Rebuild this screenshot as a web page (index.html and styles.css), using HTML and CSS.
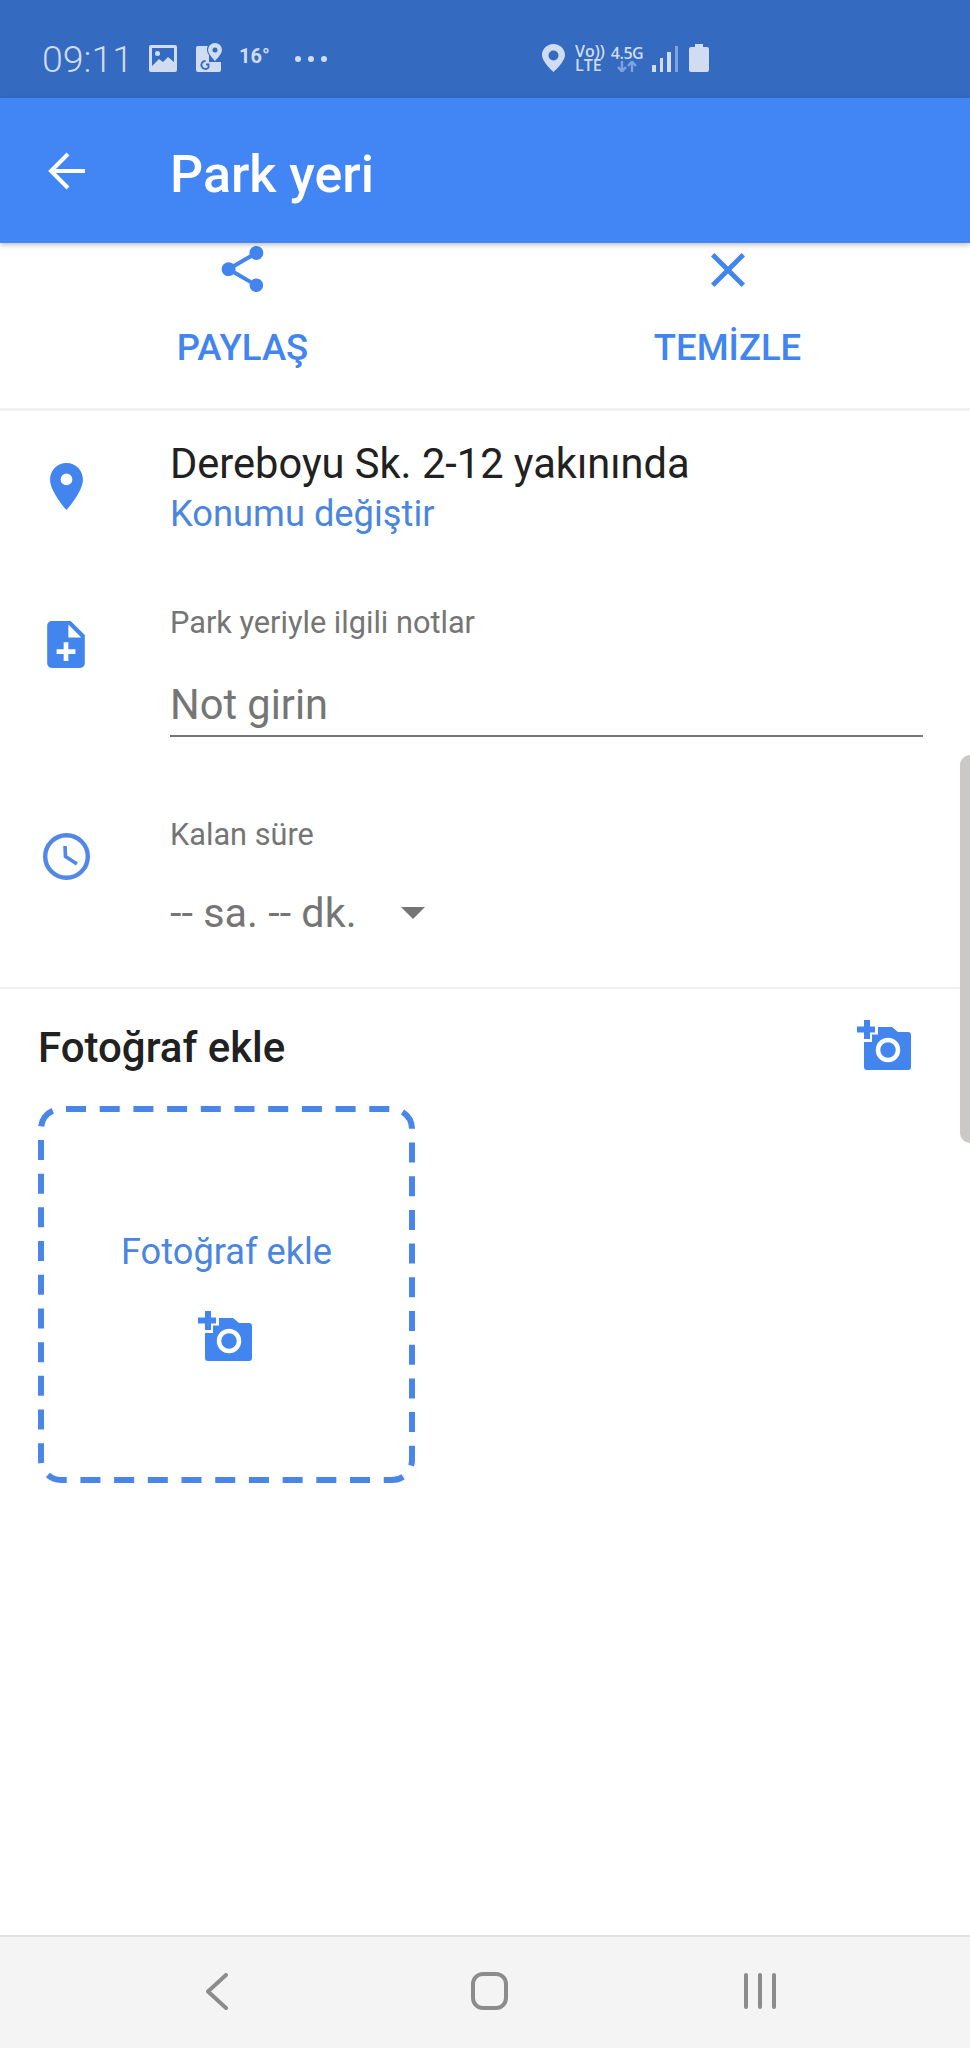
FILE: index.html
```html
<!DOCTYPE html>
<html lang="en">
<head>
    <meta charset="UTF-8">
    <meta name="viewport" content="width=device-width, initial-scale=1.0">
    <title>Park yeri</title>
    <link rel="stylesheet" href="styles.css">
</head>
<body>

    <!-- camera icon used twice -->
    <svg class="defs" width="0" height="0">
        <symbol id="add-photo" viewBox="0 0 54 50">
            <path d="M18 7H35L41 12H51a3 3 0 0 1 3 3V47a3 3 0 0 1-3 3H10a3 3 0 0 1-3-3V18z" fill="#4285ee"/>
            <path d="M10 0V22M0 9.5H21" fill="none" stroke="#fff" stroke-width="10"/>
            <path d="M10 0V19M0 9.5H18" fill="none" stroke="#4285ee" stroke-width="6"/>
            <circle cx="31" cy="30" r="10" fill="#4285ee" stroke="#fff" stroke-width="4.5"/>
        </symbol>
    </svg>

    <div class="phone">
        <div class="status-bar">
            <span class="time">09:11</span>
            <svg class="status-image" width="28" height="27" viewBox="0 0 28 27">
                <rect width="28" height="27" rx="2" fill="#cfdcf2"/>
                <rect x="3" y="3" width="22" height="21" fill="#346ac0"/>
                <circle cx="8.5" cy="8.5" r="2.5" fill="#cfdcf2"/>
                <path d="M3 21L10 14L14 17L19 12L25 17V24H3z" fill="#cfdcf2"/>
            </svg>
            <svg class="status-maps" width="27" height="30" viewBox="0 0 27 30">
                <path d="M2 4H13V20H25V28a2 2 0 0 1-2 2H2a2 2 0 0 1-2-2V6a2 2 0 0 1 2-2z" fill="#cfdcf2"/>
                <path d="M19 0a7.5 7.5 0 0 0-8 8c0 5 8 12 8 12s8-7 8-12a7.5 7.5 0 0 0-8-8z" fill="#346ac0"/>
                <path d="M19 1a7 7 0 0 0-7 7c0 4 7 11 7 11s7-7 7-11a7 7 0 0 0-7-7zm0 4.5a2.5 2.5 0 1 1 0 5 2.5 2.5 0 0 1 0-5z" fill="#cfdcf2"/>
                <path d="M9.5 19a4 4 0 1 0 3 6.5V22.500H10" fill="none" stroke="#346ac0" stroke-width="1.8"/>
            </svg>
            <span class="temp">16°</span>
            <span class="dots"><i></i><i></i><i></i></span>

            <div class="status-right">
                <svg width="23" height="28" viewBox="0 0 23 28">
                    <path fill-rule="evenodd" d="M11.5 0C5 0 0 5 0 11c0 7 11.5 17 11.5 17S23 18 23 11C23 5 18 0 11.5 0zm0 6.5a5 5 0 1 1 0 10 5 5 0 0 1 0-10z" fill="#cfdcf2"/>
                </svg>
                <div class="volte"><span>Vo))</span><span>LTE</span></div>
                <div class="net">
                    <span>4.5G</span>
                    <svg width="20" height="11" viewBox="0 0 20 11">
                        <path d="M5 0V10M1 6L5 10.500L9 6M15 11V1M11 5L15 .5L19 5" fill="none" stroke="#7fa3de" stroke-width="2.4"/>
                    </svg>
                </div>
                <div class="signal">
                    <i class="bar-1"></i><i class="bar-2"></i><i class="bar-3"></i><i class="bar-4"></i>
                </div>
                <div class="battery"></div>
            </div>
        </div>

        <div class="app-bar">
            <svg width="38" height="38" viewBox="0 0 38 38">
                <path d="M37 19H3M20 2L3 19L20 36" fill="none" stroke="#fff" stroke-width="4"/>
            </svg>
            <h1>Park yeri</h1>
        </div>

        <div class="content">
            <div class="actions">
                <div class="action">
                    <div class="action-icon">
                        <svg width="43" height="47" viewBox="3 2 18 20.3">
                            <path d="M18 16.08c-.76 0-1.44.3-1.96.77L8.91 12.7c.05-.23.09-.46.09-.7s-.04-.47-.09-.7l7.05-4.11c.54.5 1.25.81 2.04.81 1.66 0 3-1.34 3-3s-1.34-3-3-3-3 1.34-3 3c0 .24.04.47.09.7L8.04 9.81C7.5 9.31 6.79 9 6 9c-1.66 0-3 1.34-3 3s1.34 3 3 3c.79 0 1.5-.31 2.04-.81l7.12 4.16c-.05.21-.08.43-.08.65 0 1.61 1.31 2.92 2.92 2.92 1.61 0 2.92-1.31 2.92-2.92s-1.31-2.92-2.92-2.92z" fill="#4285ee"/>
                        </svg>
                    </div>
                    <span class="action-label">PAYLAŞ</span>
                </div>
                <div class="action">
                    <div class="action-icon">
                        <svg width="34" height="34" viewBox="5 5 14 14">
                            <path d="M19 6.41L17.59 5 12 10.59 6.41 5 5 6.41 10.59 12 5 17.59 6.41 19 12 13.41 17.59 19 19 17.59 13.41 12z" fill="#4285ee"/>
                        </svg>
                    </div>
                    <span class="action-label">TEMİZLE</span>
                </div>
            </div>

            <div class="form">
                <div class="row">
                    <div class="row-icon icon-place">
                        <svg width="33" height="47" viewBox="5 2 14 20">
                            <path d="M12 2C8.13 2 5 5.13 5 9c0 5.25 7 13 7 13s7-7.75 7-13c0-3.87-3.13-7-7-7zm0 9.5a2.5 2.5 0 0 1 0-5 2.5 2.5 0 0 1 0 5z" fill="#4285ee"/>
                        </svg>
                    </div>
                    <div class="row-body">
                        <p class="address">Dereboyu Sk. 2-12 yakınında</p>
                        <a class="change-link">Konumu değiştir</a>
                    </div>
                </div>

                <div class="row row-notes">
                    <div class="row-icon icon-note">
                        <svg width="38" height="47" viewBox="4 2 16 20">
                            <path d="M14 2H6c-1.1 0-2 .9-2 2v16c0 1.1.9 2 2 2h12c1.1 0 2-.9 2-2V8l-6-6zm2 14h-3v3h-2v-3H8v-2h3v-3h2v3h3v2zm-3-7V3.5L18.5 9H13z" fill="#4285ee"/>
                        </svg>
                    </div>
                    <div class="row-body">
                        <p class="field-label">Park yeriyle ilgili notlar</p>
                        <p class="note-input">Not girin</p>
                    </div>
                </div>

                <div class="row row-time">
                    <div class="row-icon icon-clock">
                        <svg width="47" height="47" viewBox="0 0 47 47">
                            <circle cx="23.5" cy="23.5" r="21.3" fill="none" stroke="#5088e8" stroke-width="4.4"/>
                            <path d="M22 13L22.5 23.5L34 31" fill="none" stroke="#5088e8" stroke-width="3.6"/>
                        </svg>
                    </div>
                    <div class="row-body">
                        <p class="field-label">Kalan süre</p>
                        <div class="time-select">
                            <span>-- sa. -- dk.</span>
                            <i class="caret"></i>
                        </div>
                    </div>
                </div>
            </div>

            <div class="photos">
                <div class="photos-head">
                    <h2>Fotoğraf ekle</h2>
                    <svg class="camera" width="54" height="50"><use href="#add-photo"/></svg>
                </div>
                <div class="photo-box">
                    <svg class="photo-dash" width="377" height="377" viewBox="0 0 377 377">
                        <rect x="3" y="3" width="371" height="371" rx="20" fill="none" stroke="#4a86e8" stroke-width="6" stroke-dasharray="20 13.7" stroke-dashoffset="-5"/>
                    </svg>
                    <span class="photo-text">Fotoğraf ekle</span>
                    <svg class="camera" width="54" height="50"><use href="#add-photo"/></svg>
                </div>
            </div>

            <div class="scrollbar"></div>
        </div>

        <div class="nav-bar">
            <svg width="22" height="37" viewBox="0 0 22 37">
                <path d="M20 2L2 18.5L20 35" fill="none" stroke="#8c8c8c" stroke-width="4" stroke-linecap="round" stroke-linejoin="round"/>
            </svg>
            <div class="nav-home"></div>
            <div class="nav-recent"><i></i><i></i><i></i></div>
        </div>
    </div>

</body>
</html>
```

FILE: styles.css
```css
* {
    box-sizing: border-box;
}

body {
    margin: 0;
    background-color: #fff;
    font-family: Roboto, "Liberation Sans", sans-serif;
}

h1, h2, p {
    margin: 0;
}

i {
    display: block;
}

svg {
    display: block;
    flex-shrink: 0;
}

.defs {
    position: absolute;
}

.phone {
    display: flex;
    flex-direction: column;
    height: 100vh;
    overflow: hidden;
}

/* status bar */
.status-bar {
    display: flex;
    align-items: center;
    height: 98px;
    padding: 0 261px 0 42px;
    background-color: #346ac0;
    color: #cfdcf2;
    flex-shrink: 0;
}

.time {
    width: 85px;
    margin-top: 20px;
    font-size: 37.5px;
    font-weight: 300;
    white-space: nowrap;
}

.status-image {
    margin-left: 22px;
    margin-top: 18px;
}

.status-maps {
    margin-left: 19px;
    margin-top: 16px;
}

.temp {
    margin-left: 16px;
    margin-top: 14px;
    font-size: 20px;
    font-weight: 700;
}

.dots {
    display: flex;
    gap: 7px;
    margin-left: 25px;
    margin-top: 19px;
}

.dots i {
    width: 6px;
    height: 6px;
    border-radius: 50%;
    background-color: #cfdcf2;
}

.status-right {
    display: flex;
    align-items: flex-end;
    margin-left: auto;
    height: 28px;
    margin-top: 18px;
}

.volte {
    display: flex;
    flex-direction: column;
    width: 27px;
    margin-left: 10px;
    font-family: "Open Sans", sans-serif;
    font-size: 16px;
    font-weight: 600;
    line-height: 14px;
    white-space: nowrap;
}

.net {
    display: flex;
    flex-direction: column;
    align-items: center;
    width: 30px;
    margin-left: 10px;
    font-family: "Open Sans", sans-serif;
    font-size: 16px;
    font-weight: 600;
    line-height: 16px;
    letter-spacing: -0.5px;
    white-space: nowrap;
}

.signal {
    display: flex;
    align-items: flex-end;
    gap: 4px;
    margin-left: 10px;
}

.signal i {
    width: 3.5px;
    background-color: #cfdcf2;
}

.bar-1 {
    height: 7px;
}

.bar-2 {
    height: 14px;
}

.bar-3 {
    height: 20px;
}

.signal .bar-4 {
    height: 26px;
    background-color: #7fa3de;
}

.battery {
    position: relative;
    width: 20px;
    height: 25px;
    margin-left: 11px;
    border-radius: 2px;
    background-color: #cfdcf2;
}

.battery::before {
    content: "";
    position: absolute;
    top: -3px;
    left: 6px;
    width: 8px;
    height: 3px;
    background-color: #cfdcf2;
}

/* app bar */
.app-bar {
    position: relative;
    display: flex;
    align-items: center;
    gap: 84px;
    height: 145px;
    padding-left: 48px;
    background-color: #4285f4;
    box-shadow: 0 2px 5px rgba(0, 0, 0, 0.25);
    flex-shrink: 0;
    z-index: 1;
}

.app-bar h1 {
    margin-top: 8px;
    font-size: 52px;
    font-weight: 500;
    color: #fff;
}

.content {
    position: relative;
    flex: 1;
    overflow: hidden;
}

/* share / clear */
.actions {
    display: grid;
    grid-template-columns: 1fr 1fr;
    height: 168px;
    padding-top: 3px;
    border-bottom: 3px solid #f1f1f1;
}

.action {
    display: flex;
    flex-direction: column;
    align-items: center;
}

.action-icon {
    display: flex;
    align-items: center;
    height: 47px;
}

.action-label {
    margin-top: 31px;
    font-size: 36.5px;
    font-weight: 500;
    line-height: 48px;
    color: #4285ee;
}

/* form rows */
.form {
    padding: 28px 47px 49px 0;
    border-bottom: 2px solid #f1f1f1;
}

.row {
    display: flex;
    gap: 38px;
}

.row-notes {
    margin-top: 66px;
}

.row-time {
    margin-top: 78px;
}

.row-icon {
    display: flex;
    justify-content: center;
    width: 132px;
    flex-shrink: 0;
}

.icon-place {
    padding-top: 24px;
}

.icon-note,
.icon-clock {
    padding-top: 18px;
}

.row-body {
    flex: 1;
}

.address {
    font-size: 41.6px;
    line-height: 50px;
    color: #212121;
}

.change-link {
    display: block;
    margin-top: 2px;
    font-size: 36.3px;
    line-height: 46px;
    color: #4a86e0;
}

.field-label {
    font-size: 30.7px;
    line-height: 40px;
    color: #757575;
}

.note-input {
    margin-top: 37px;
    padding-bottom: 5px;
    border-bottom: 2px solid #757575;
    font-size: 41.6px;
    line-height: 50px;
    color: #757575;
}

.time-select {
    display: flex;
    align-items: center;
    gap: 44px;
    margin-top: 33px;
    font-size: 41.4px;
    line-height: 50px;
    color: #757575;
}

.caret {
    width: 0;
    height: 0;
    border-left: 12px solid transparent;
    border-right: 12px solid transparent;
    border-top: 12px solid #757575;
}

/* photos */
.photos {
    padding: 31px 59px 0 38px;
}

.photos-head {
    display: flex;
    justify-content: space-between;
    height: 50px;
}

.photos-head h2 {
    margin-top: 3px;
    font-size: 42px;
    font-weight: 500;
    line-height: 50px;
    color: #212121;
}

.photo-box {
    position: relative;
    display: flex;
    flex-direction: column;
    align-items: center;
    width: 377px;
    height: 377px;
    margin-top: 36px;
    padding-top: 123px;
}

.photo-dash {
    position: absolute;
    top: 0;
    left: 0;
}

.photo-text {
    font-size: 36.2px;
    line-height: 46px;
    color: #4a86e0;
}

.photo-box .camera {
    margin-top: 36px;
    margin-right: 3px;
}

.scrollbar {
    position: absolute;
    top: 512px;
    right: 0;
    width: 10px;
    height: 388px;
    border-radius: 10px 0 0 10px;
    background-color: #cbc8c5;
}

/* bottom nav */
.nav-bar {
    display: flex;
    align-items: center;
    height: 113px;
    padding: 0 0 3px 206px;
    background-color: #f4f4f4;
    border-top: 2px solid #e2e2e2;
    flex-shrink: 0;
}

.nav-home {
    width: 37px;
    height: 38px;
    margin-left: 243px;
    border: 4.5px solid #8c8c8c;
    border-radius: 12px;
}

.nav-recent {
    display: flex;
    gap: 10px;
    margin-left: 236px;
}

.nav-recent i {
    width: 4px;
    height: 36px;
    border-radius: 2px;
    background-color: #8c8c8c;
}
```
